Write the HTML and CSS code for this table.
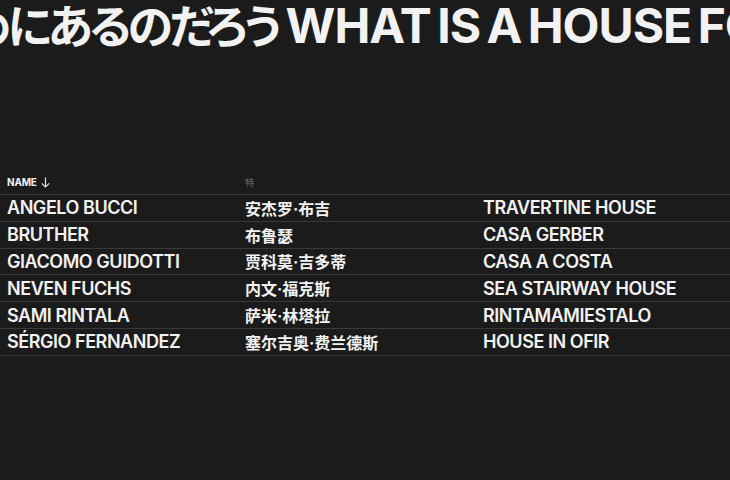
FILE: index.html
```html
<!DOCTYPE html>
<html lang="ja">
<head>
<meta charset="utf-8">
<link rel="stylesheet" href="styles.css">
</head>
<body>
<div class="page">
  <h1 class="title"><span class="jp">家は何のためにあるのだろう</span><span class="en">WHAT IS A HOUSE FOR?</span></h1>
  <div class="table">
    <div class="row head">
      <div class="cell">NAME <svg class="arrow" width="9" height="11" viewBox="0 0 9 11"><path d="M4.5 0.5V10M0.8 6.3L4.5 10L8.2 6.3" fill="none" stroke="#e8e8e8" stroke-width="1.1"/></svg></div>
      <div class="cell zh dim">特</div>
      <div class="cell"></div>
    </div>
    <div class="row">
      <div class="cell">ANGELO BUCCI</div>
      <div class="cell zh">安杰罗·布吉</div>
      <div class="cell">TRAVERTINE HOUSE</div>
    </div>
    <div class="row">
      <div class="cell">BRUTHER</div>
      <div class="cell zh">布鲁瑟</div>
      <div class="cell">CASA GERBER</div>
    </div>
    <div class="row">
      <div class="cell">GIACOMO GUIDOTTI</div>
      <div class="cell zh">贾科莫·吉多蒂</div>
      <div class="cell">CASA A COSTA</div>
    </div>
    <div class="row">
      <div class="cell">NEVEN FUCHS</div>
      <div class="cell zh">内文·福克斯</div>
      <div class="cell">SEA STAIRWAY HOUSE</div>
    </div>
    <div class="row">
      <div class="cell">SAMI RINTALA</div>
      <div class="cell zh">萨米·林塔拉</div>
      <div class="cell">RINTAMAMIESTALO</div>
    </div>
    <div class="row">
      <div class="cell">SÉRGIO FERNANDEZ</div>
      <div class="cell zh">塞尔吉奥·费兰德斯</div>
      <div class="cell">HOUSE IN OFIR</div>
    </div>
  </div>
</div>
</body>
</html>
```

FILE: styles.css
```css
html, body {
  margin: 0;
  padding: 0;
  background: #1b1b1b;
  color: #f2f2f2;
  font-family: Inter, "Noto Sans CJK SC", sans-serif;
}
.page {
  width: 730px;
  height: 480px;
  overflow: hidden;
}
.title {
  margin: 0;
  height: 176px;
  white-space: nowrap;
  overflow: hidden;
  font-size: 48px;
  font-weight: 700;
  line-height: 46px;
  text-indent: -241px;
}
.title .jp {
  font-family: "Noto Sans CJK JP", sans-serif;
  font-feature-settings: "palt";
  font-size: 46px;
  letter-spacing: -4px;
  margin-right: 8px;
}
.title .en {
  font-family: Inter, sans-serif;
  letter-spacing: -1px;
  word-spacing: -4px;
}
.table {
  display: flex;
  flex-direction: column;
}
.row {
  display: grid;
  grid-template-columns: 238px 238px 1fr;
  height: 25.8px;
  border-bottom: 1px solid #3a3a3a;
  align-items: center;
}
.cell {
  padding-left: 7px;
  font-size: 18px;
  font-weight: 600;
  letter-spacing: -0.45px;
  white-space: nowrap;
}
.cell.zh {
  font-family: Inter, "Noto Sans CJK SC", sans-serif;
  font-weight: 700;
  font-size: 16px;
  letter-spacing: 0;
}
.row.head {
  height: 18px;
  align-items: start;
}
.row.head .cell {
  font-size: 10px;
  font-weight: 700;
  letter-spacing: -0.2px;
  display: flex;
  align-items: center;
  gap: 4px;
}
.row.head .cell.zh {
  font-weight: 400;
  font-size: 9px;
}
.arrow {
  display: block;
}
.dim {
  color: #666;
}
```
